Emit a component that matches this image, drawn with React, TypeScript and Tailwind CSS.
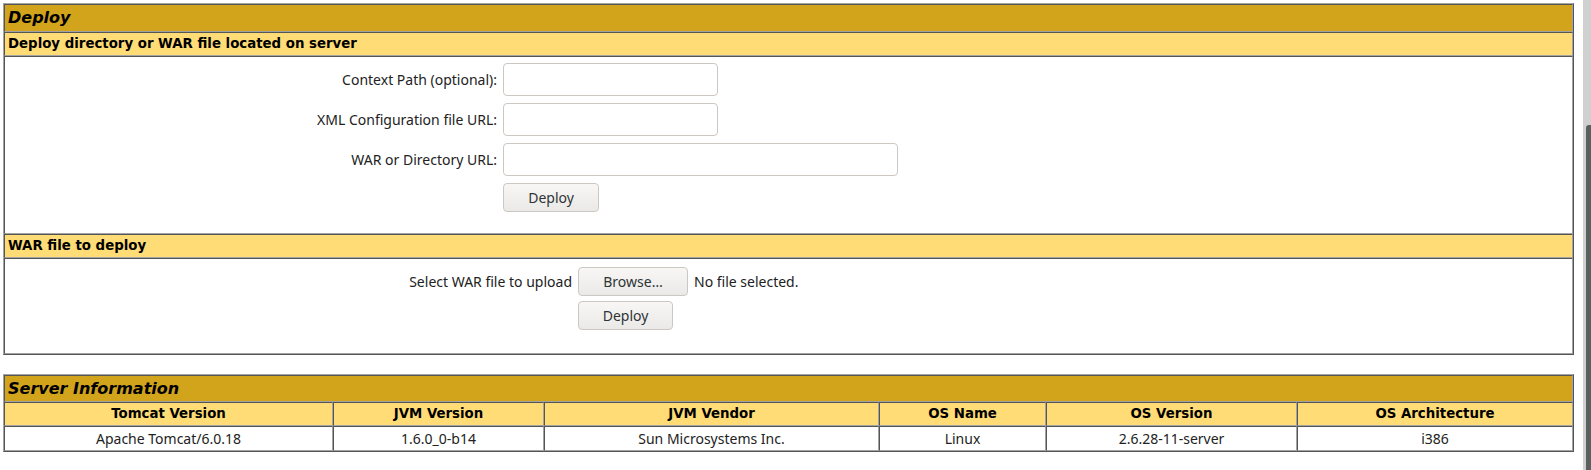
const cell =
  "border border-t-[#555] border-l-[#555] border-r-[#a3a3a3] border-b-[#a3a3a3]";
const tableBox =
  "w-[1571px] border border-t-[#a3a3a3] border-l-[#a3a3a3] border-r-[#555] border-b-[#555] flex flex-col";
const bold = "font-['DejaVu_Sans',sans-serif] font-bold text-[13.33px] text-black";
const plain = "font-['Noto_Sans',sans-serif] text-[14px] text-[#222]";
const btn =
  "h-[29px] rounded-[4px] border border-[#cdc7c2] bg-gradient-to-b from-[#f8f7f6] to-[#ebe9e7] font-['Noto_Sans',sans-serif] text-[14px] text-[#2e3436]";
const field = "h-[33px] rounded-[4px] border border-[#cdc7c2] bg-white";

function TitleRow({ text, h }: { text: string; h: string }) {
  return (
    <div className={`${cell} ${h} bg-[#D2A41C] px-[3px] flex items-center`}>
      <span className="font-['DejaVu_Sans',sans-serif] font-bold italic text-[16px] text-black">
        {text}
      </span>
    </div>
  );
}

function SubHeader({ text }: { text: string }) {
  return (
    <div className={`${cell} h-[24px] bg-[#FFDC75] px-[3px] flex items-center ${bold}`}>
      {text}
    </div>
  );
}

const info = [
  ["Tomcat Version", "Apache Tomcat/6.0.18"],
  ["JVM Version", "1.6.0_0-b14"],
  ["JVM Vendor", "Sun Microsystems Inc."],
  ["OS Name", "Linux"],
  ["OS Version", "2.6.28-11-server"],
  ["OS Architecture", "i386"],
];

export default function App() {
  return (
    <div className="flex h-[470px] w-full bg-white overflow-hidden">
      <div className="flex-1 pl-[3px] pt-[3px]">
        {/* Deploy */}
        <div className={tableBox}>
          <TitleRow text="Deploy" h="h-[28px]" />
          <SubHeader text="Deploy directory or WAR file located on server" />
          <div className={`${cell} h-[178px] pt-[6px]`}>
            <div className="grid grid-cols-[495px_auto] gap-x-[3px] gap-y-[7px] items-center">
              <span className={`${plain} text-right pr-[3px]`}>Context Path (optional):</span>
              <div className={`${field} w-[215px]`} />
              <span className={`${plain} text-right pr-[3px]`}>XML Configuration file URL:</span>
              <div className={`${field} w-[215px]`} />
              <span className={`${plain} text-right pr-[3px]`}>WAR or Directory URL:</span>
              <div className={`${field} w-[395px]`} />
              <span />
              <button className={`${btn} w-[96px]`}>Deploy</button>
            </div>
          </div>
          <SubHeader text="WAR file to deploy" />
          <div className={`${cell} h-[96px] pt-[8px]`}>
            <div className="grid grid-cols-[570px_auto] gap-x-[3px] gap-y-[5px] items-center">
              <span className={`${plain} text-right pr-[3px]`}>Select WAR file to upload</span>
              <div className="flex items-center gap-[6px]">
                <button className={`${btn} w-[110px]`}>Browse…</button>
                <span className={plain}>No file selected.</span>
              </div>
              <span />
              <button className={`${btn} w-[95px]`}>Deploy</button>
            </div>
          </div>
        </div>

        {/* Server Information */}
        <div className={`${tableBox} mt-[19px]`}>
          <TitleRow text="Server Information" h="h-[27px]" />
          <div className="grid grid-cols-[329px_211px_335px_167px_251px_276px]">
            {info.map(([h]) => (
              <div key={h} className={`${cell} h-[24px] bg-[#FFDC75] flex items-center justify-center ${bold}`}>
                {h}
              </div>
            ))}
            {info.map(([h, v]) => (
              <div key={h + "v"} className={`${cell} h-[25px] flex items-center justify-center ${plain}`}>
                {v}
              </div>
            ))}
          </div>
        </div>
      </div>
      <div className="w-[8px] h-full bg-[#d0d0d0] flex flex-col pt-[125px] pl-[3px]">
        <div className="flex-1 bg-[#5a5f5f] rounded-tl-[3px]" />
      </div>
    </div>
  );
}
